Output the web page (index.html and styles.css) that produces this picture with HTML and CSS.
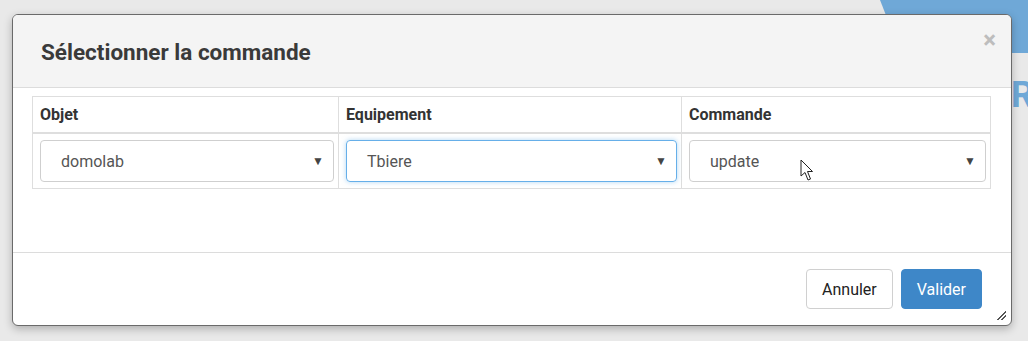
FILE: index.html
```html
<!DOCTYPE html>
<html lang="fr">
<head>
  <meta charset="UTF-8">
  <title>Sélectionner la commande</title>
  <link rel="stylesheet" href="styles.css">
</head>
<body>

  <div class="backdrop">
    <div class="banner"></div>
    <span class="logo-letter">R</span>
  </div>

  <div class="modal">
    <div class="modal-header">
      <h3>Sélectionner la commande</h3>
      <span class="close">&times;</span>
    </div>

    <div class="modal-body">
      <table class="cmd-table">
        <thead>
          <tr>
            <th class="col-obj">Objet</th>
            <th class="col-eq">Equipement</th>
            <th>Commande</th>
          </tr>
        </thead>
        <tbody>
          <tr>
            <td><div class="fake-select">domolab<span class="caret">&#9660;</span></div></td>
            <td><div class="fake-select focus">Tbiere<span class="caret">&#9660;</span></div></td>
            <td>
              <div class="fake-select">update<span class="caret">&#9660;</span></div>
              <svg class="cursor" width="14" height="24" viewBox="0 0 14 24">
                <path d="M1 1 L1 17 L5 13.5 L8 21 L10.5 20 L7.5 12.5 L12.5 12.5 Z" fill="#fff" stroke="#222" stroke-width="1"/>
              </svg>
            </td>
          </tr>
        </tbody>
      </table>
    </div>

    <div class="modal-footer">
      <button class="btn btn-default">Annuler</button>
      <button class="btn btn-primary">Valider</button>
    </div>

    <div class="grip"></div>
  </div>

</body>
</html>
```

FILE: styles.css
```css
body {
  margin: 0;
  background-color: #e9e9e9;
  font-family: Roboto, 'Liberation Sans', sans-serif;
  color: #333;
  width: 1028px;
  height: 341px;
  overflow: hidden;
  position: relative;
}

.backdrop .banner {
  position: absolute;
  top: 0;
  left: 880px;
  width: 148px;
  height: 53px;
  background-color: #6fa8d7;
  clip-path: polygon(0 0, 100% 0, 100% 100%, 14% 100%);
}

.backdrop .logo-letter {
  position: absolute;
  left: 1011px;
  top: 74px;
  font-size: 36px;
  font-weight: bold;
  color: #6fa8d7;
}

.modal {
  position: absolute;
  left: 12px;
  top: 14px;
  width: 998px;
  height: 310px;
  background-color: #fff;
  border: 1px solid #6a6a6a;
  border-radius: 6px;
  box-shadow: 0 3px 8px rgba(0,0,0,0.25);
  overflow: hidden;
}

.modal-header {
  background-color: #f4f4f4;
  height: 72px;
  border-bottom: 1px solid #dcdcdc;
  padding: 0 28px;
  display: flex;
  align-items: center;
  justify-content: space-between;
}

.modal-header h3 {
  margin: 2px 0 0 0;
  font-size: 22.5px;
  font-weight: bold;
  color: #3a3a3a;
}

.close {
  font-size: 24px;
  font-weight: bold;
  color: #bdbdbd;
  margin-top: -22px;
  margin-right: -13px;
}

.modal-body {
  padding: 8px 20px 0 19px;
  height: 156px;
}

.cmd-table {
  width: 959px;
  border-collapse: collapse;
}

.cmd-table th,
.cmd-table td {
  border: 1px solid #dedede;
  text-align: left;
}

.cmd-table th {
  font-size: 16px;
  font-weight: bold;
  color: #333;
  padding: 8px 7px 8px;
  border-bottom: 2px solid #dedede;
}

.col-obj { width: 291px; }
.col-eq { width: 328px; }

.cmd-table td {
  padding: 6px 4px 6px 7px;
  position: relative;
}

.fake-select {
  height: 40px;
  border: 1px solid #cfcfcf;
  border-radius: 4px;
  padding: 0 9px 0 20px;
  display: flex;
  align-items: center;
  justify-content: space-between;
  font-size: 16px;
  color: #555;
}

.fake-select.focus {
  border-color: #66afe9;
  box-shadow: 0 0 5px rgba(102,175,233,0.5);
}

.caret {
  font-size: 12px;
  color: #444;
}

.cursor {
  position: absolute;
  left: 118px;
  top: 25px;
}

.modal-footer {
  border-top: 1px solid #dcdcdc;
  height: 72px;
  display: flex;
  justify-content: flex-end;
  align-items: center;
  gap: 8px;
  padding-right: 29px;
}

.btn {
  height: 40px;
  font-family: Roboto, 'Liberation Sans', sans-serif;
  font-size: 16px;
  border-radius: 4px;
  padding: 0 15px;
  cursor: pointer;
}

.btn-default {
  background-color: #fff;
  border: 1px solid #d0d0d0;
  color: #222;
}

.btn-primary {
  background-color: #3e87c8;
  border: 1px solid #3e87c8;
  color: #fff;
}

.grip {
  position: absolute;
  right: 5px;
  bottom: 5px;
  width: 10px;
  height: 10px;
  background: repeating-linear-gradient(135deg, transparent 0 1.5px, #555 1.5px 3px);
  clip-path: polygon(100% 0, 100% 100%, 0 100%);
}
```
